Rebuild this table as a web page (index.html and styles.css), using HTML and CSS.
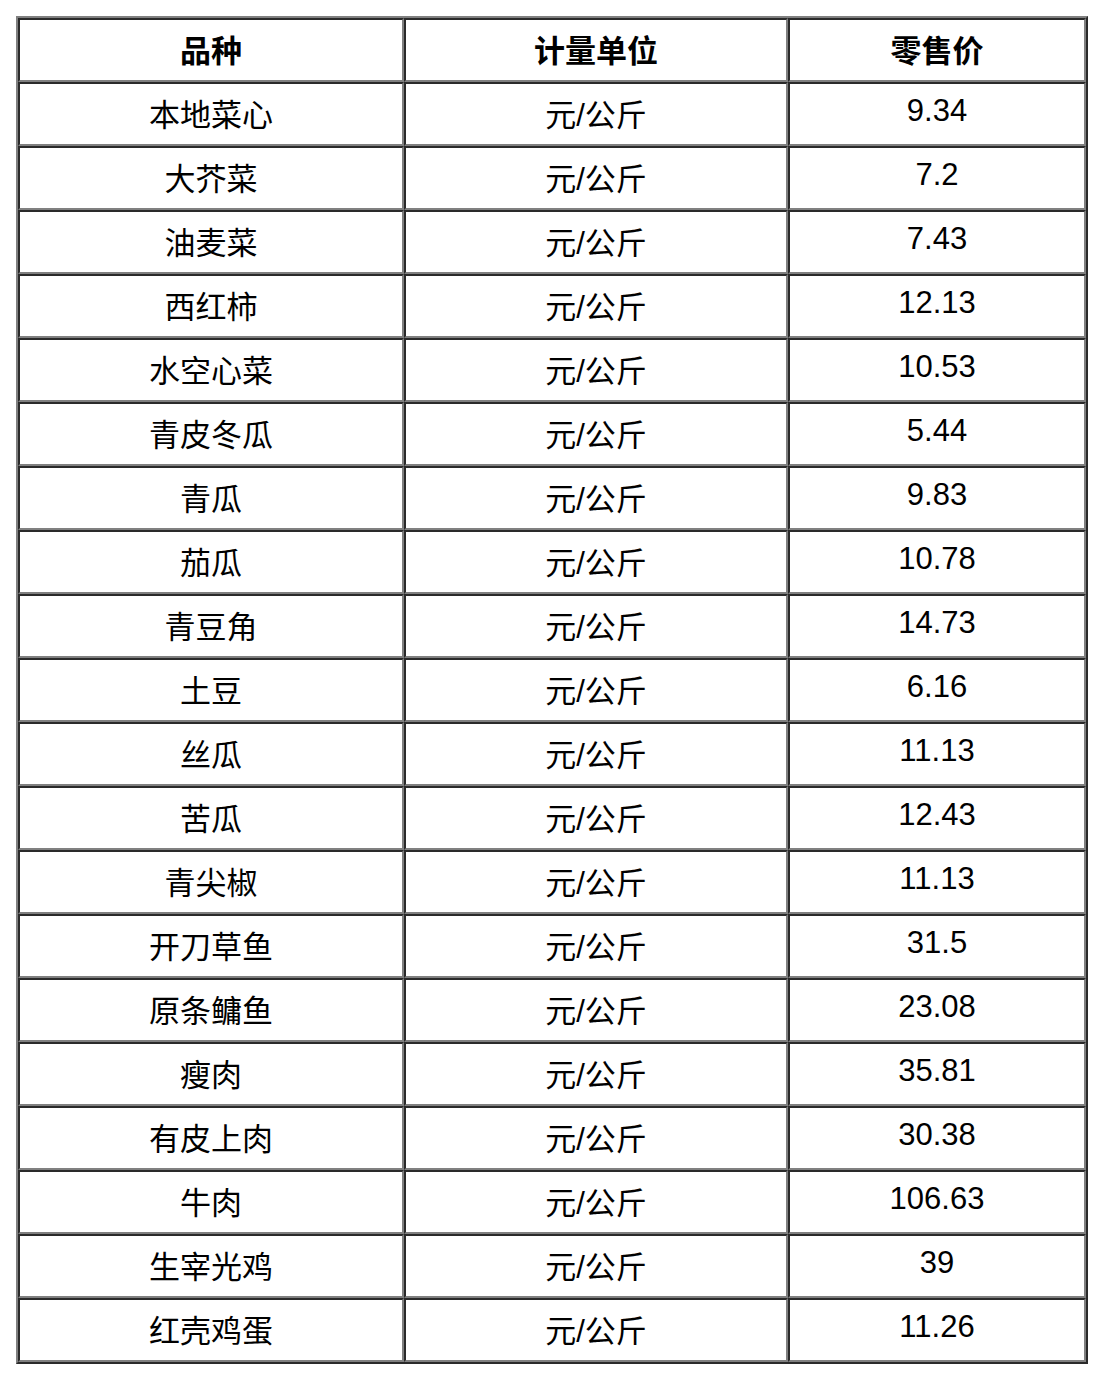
FILE: index.html
```html
<!DOCTYPE html>
<html lang="zh-CN">
<head>
<meta charset="utf-8">
<link rel="stylesheet" href="styles.css">
</head>
<body>
<table class="price-table">
<thead>
<tr><th class="c1">品种</th><th class="c2">计量单位</th><th class="c3">零售价</th></tr>
</thead>
<tbody>
<tr><td>本地菜心</td><td>元/公斤</td><td class="num">9.34</td></tr>
<tr><td>大芥菜</td><td>元/公斤</td><td class="num">7.2</td></tr>
<tr><td>油麦菜</td><td>元/公斤</td><td class="num">7.43</td></tr>
<tr><td>西红柿</td><td>元/公斤</td><td class="num">12.13</td></tr>
<tr><td>水空心菜</td><td>元/公斤</td><td class="num">10.53</td></tr>
<tr><td>青皮冬瓜</td><td>元/公斤</td><td class="num">5.44</td></tr>
<tr><td>青瓜</td><td>元/公斤</td><td class="num">9.83</td></tr>
<tr><td>茄瓜</td><td>元/公斤</td><td class="num">10.78</td></tr>
<tr><td>青豆角</td><td>元/公斤</td><td class="num">14.73</td></tr>
<tr><td>土豆</td><td>元/公斤</td><td class="num">6.16</td></tr>
<tr><td>丝瓜</td><td>元/公斤</td><td class="num">11.13</td></tr>
<tr><td>苦瓜</td><td>元/公斤</td><td class="num">12.43</td></tr>
<tr><td>青尖椒</td><td>元/公斤</td><td class="num">11.13</td></tr>
<tr><td>开刀草鱼</td><td>元/公斤</td><td class="num">31.5</td></tr>
<tr><td>原条鳙鱼</td><td>元/公斤</td><td class="num">23.08</td></tr>
<tr><td>瘦肉</td><td>元/公斤</td><td class="num">35.81</td></tr>
<tr><td>有皮上肉</td><td>元/公斤</td><td class="num">30.38</td></tr>
<tr><td>牛肉</td><td>元/公斤</td><td class="num">106.63</td></tr>
<tr><td>生宰光鸡</td><td>元/公斤</td><td class="num">39</td></tr>
<tr><td>红壳鸡蛋</td><td>元/公斤</td><td class="num">11.26</td></tr>
</tbody>
</table>
</body>
</html>
```

FILE: styles.css
```css
html, body {
  margin: 0;
  padding: 0;
  background: #ffffff;
}
body {
  padding: 16px;
  font-family: "Liberation Sans", "Noto Sans CJK SC", sans-serif;
  font-size: 31px;
  color: #000;
}
.price-table {
  width: 1072px;
  border-collapse: separate;
  border-spacing: 0;
  table-layout: fixed;
  border-style: solid;
  border-width: 2px;
  border-color: #808080 #2a2a2a #2a2a2a #808080;
}
.price-table th,
.price-table td {
  box-sizing: border-box;
  height: 64px;
  padding: 0 0 3px 0;
  text-align: center;
  vertical-align: middle;
  border-style: solid;
  border-width: 2px;
  border-color: #2a2a2a #808080 #808080 #2a2a2a;
}
.price-table th {
  font-weight: bold;
}
.c1 { width: 386px; }
.c2 { width: 384px; }
.c3 { width: 298px; }
.price-table td.num {
  padding-bottom: 6px;
}
```
